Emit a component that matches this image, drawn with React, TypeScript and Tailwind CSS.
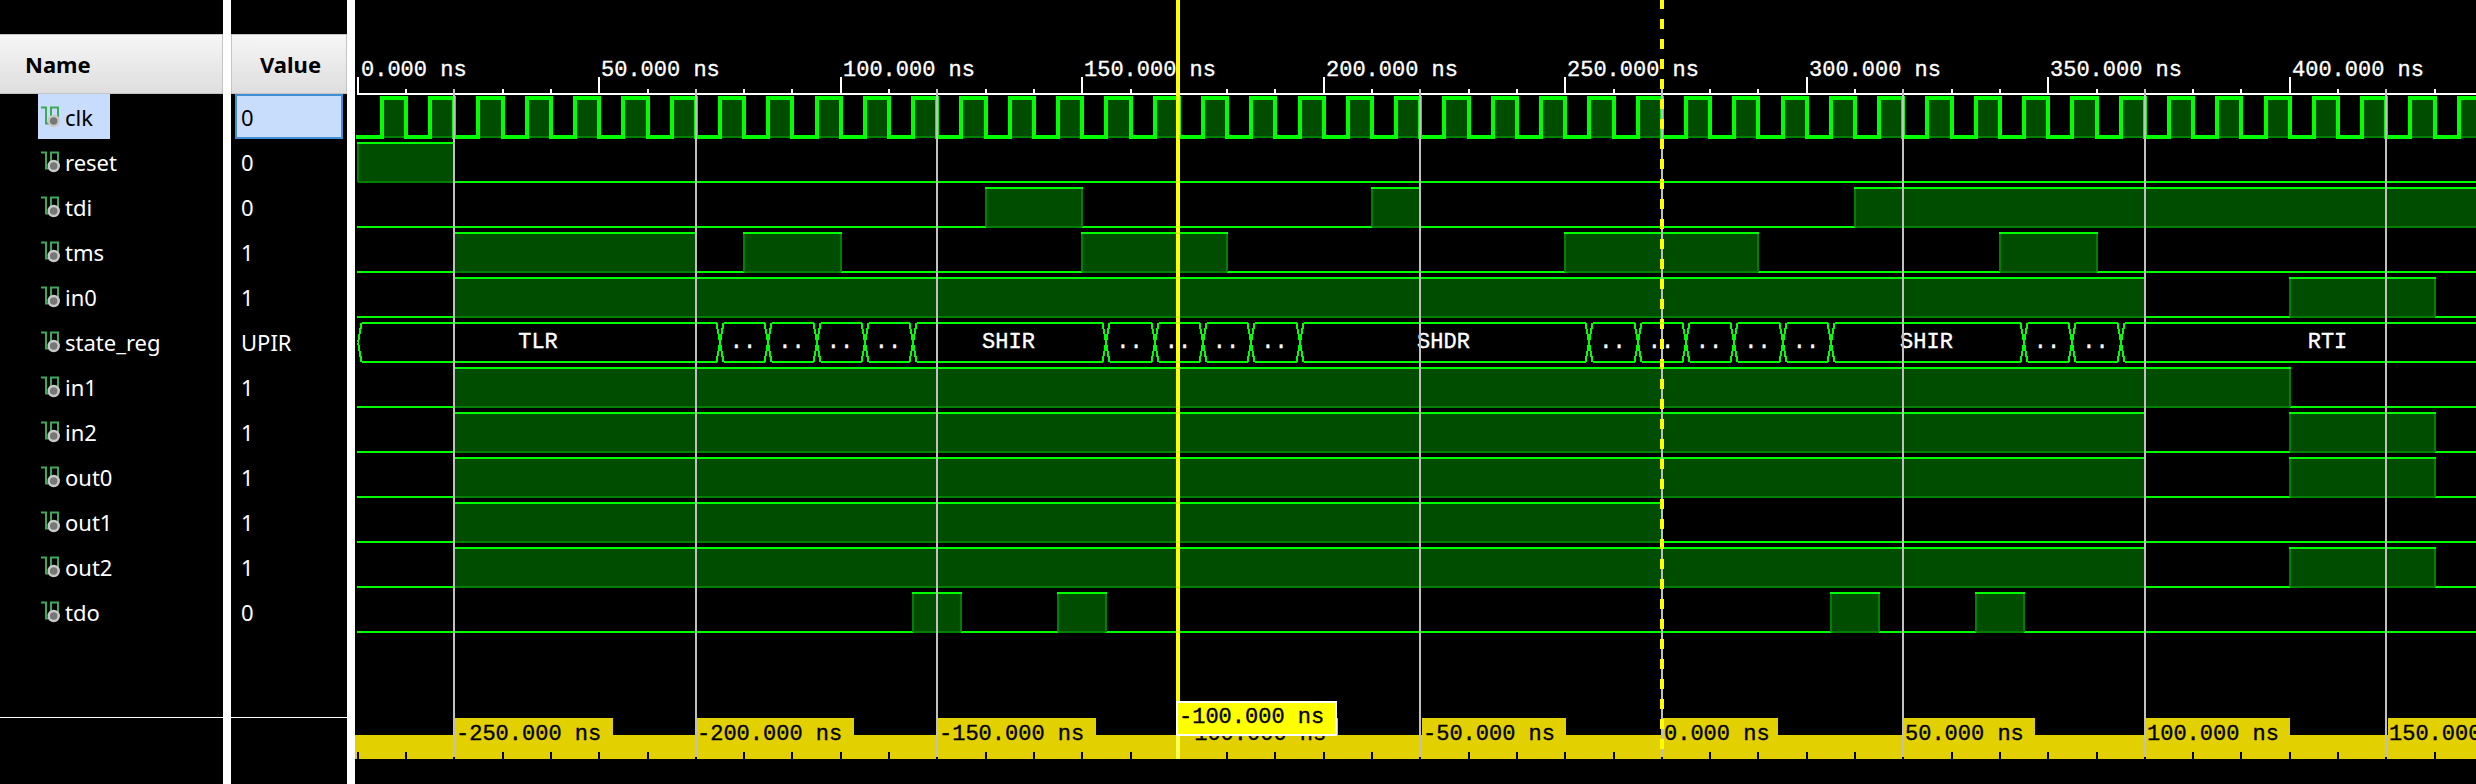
const signals = [
  { name: 'clk', value: '0' },
  { name: 'reset', value: '0' },
  { name: 'tdi', value: '0' },
  { name: 'tms', value: '1' },
  { name: 'in0', value: '1' },
  { name: 'state_reg', value: 'UPIR' },
  { name: 'in1', value: '1' },
  { name: 'in2', value: '1' },
  { name: 'out0', value: '1' },
  { name: 'out1', value: '1' },
  { name: 'out2', value: '1' },
  { name: 'tdo', value: '0' },
];

const END = 440;
const px = (t: number) => Math.round(357.7 + 4.83 * t);
const lowY = (row: number) => 137 + 45 * row;
const highY = (row: number) => 98 + 45 * row;

// high intervals in ns, index is the row number
const levels: Record<number, number[][]> = {
  1: [[0, 20]],
  2: [[130, 150], [210, 220], [310, END]],
  3: [[20, 70], [80, 100], [150, 180], [250, 290], [340, 360]],
  4: [[20, 370], [400, 430]],
  6: [[20, 400]],
  7: [[20, 370], [400, 430]],
  8: [[20, 370], [400, 430]],
  9: [[20, 270]],
  10: [[20, 370], [400, 430]],
  11: [[115, 125], [145, 155], [305, 315], [335, 345]],
};

const busSegments: [number, number, string][] = [
  [0, 75, 'TLR'], [75, 85, '..'], [85, 95, '..'], [95, 105, '..'], [105, 115, '..'],
  [115, 155, 'SHIR'], [155, 165, '..'], [165, 175, '..'], [175, 185, '..'], [185, 195, '..'],
  [195, 255, 'SHDR'], [255, 265, '..'], [265, 275, '..'], [275, 285, '..'], [285, 295, '..'], [295, 305, '..'],
  [305, 345, 'SHIR'], [345, 355, '..'], [355, 365, '..'], [365, 451, 'RTI'],
];

const bandTabs: [number, number, string][] = [
  [455, 158, '-250.000 ns'], [696, 158, '-200.000 ns'], [938, 158, '-150.000 ns'], [1180, 158, '-100.000 ns'],
  [1422, 144, '-50.000 ns'], [1663, 115, '0.000 ns'], [1904, 131, '50.000 ns'], [2146, 144, '100.000 ns'],
  [2388, 130, '150.000 ns'],
];

const range = (n: number) => Array.from({ length: n }, (_, i) => i);

function SignalIcon() {
  return (
    <svg width="24" height="27" viewBox="41 103 24 27" className="shrink-0 ml-[3px]">
      <path d="M41 107.5H46V123.5H51V107.5H58V118" fill="none" stroke="#3fa85a" strokeWidth="2" />
      <circle cx="53.7" cy="121" r="5" fill="#777" stroke="#c8c8c8" strokeWidth="2.5" />
    </svg>
  );
}

function Level({ row }: { row: number }) {
  const low = lowY(row);
  const high = highY(row);
  const spans = levels[row];
  let cursor = 0;
  const lows: number[][] = [];
  spans.forEach(([a, b]) => {
    if (a > cursor) lows.push([cursor, a]);
    cursor = b;
  });
  if (cursor < END) lows.push([cursor, END]);
  return (
    <g>
      {lows.map(([a, b]) => (
        <rect key={a} x={px(a) - 1} y={low - 1} width={px(b) - px(a) + 1} height={2} fill="#00ff00" />
      ))}
      {spans.map(([a, b]) => (
        <g key={a}>
          <rect x={px(a)} y={high} width={px(b) - px(a)} height={low - high + 1} fill="#004d00" />
          <rect x={px(a)} y={low - 1} width={px(b) - px(a)} height={2} fill="#008000" />
          <rect x={px(a) - 1} y={high} width={2} height={low - high} fill="#008000" />
          <rect x={px(b) - 1} y={high} width={2} height={low - high} fill="#008000" />
          <rect x={px(a) - 1} y={high - 1} width={px(b) - px(a) + 2} height={2} fill="#00ff00" />
        </g>
      ))}
    </g>
  );
}

function Clock() {
  let d = 'M356 137';
  for (let t = 5; t < END; t += 10) {
    d += `H${px(t)}V98H${px(t + 5)}V137`;
  }
  return (
    <g>
      {range(44).map((i) => (
        <rect key={i} x={px(5 + i * 10)} y={98} width={24} height={40} fill="#004d00" />
      ))}
      {range(44).map((i) => (
        <rect key={i} x={px(5 + i * 10)} y={136} width={24} height={2} fill="#008000" />
      ))}
      <path d={d} fill="none" stroke="#00ff00" strokeWidth="4" />
    </g>
  );
}

function Bus() {
  const top = 323;
  const bottom = 362;
  const mid = (top + bottom) / 2;
  return (
    <g>
      <path d={`M358 ${mid}L361.5 ${top}M358 ${mid}L361.5 ${bottom}`} stroke="#00ff00" strokeWidth="2" fill="none" />
      {busSegments.map(([a, b, label]) => {
        const x0 = px(a);
        const x1 = px(b);
        return (
          <g key={a}>
            <path
              d={`M${x0 + 3.5} ${top}H${x1 - 3.5}L${x1 + 3.5} ${bottom}M${x0 + 3.5} ${bottom}H${x1 - 3.5}L${x1 + 3.5} ${top}`}
              stroke="#00ff00"
              strokeWidth="2"
              fill="none"
            />
            <text x={(x0 + x1) / 2 - 1} y={348} textAnchor="middle" fill="#fff" stroke="#fff" strokeWidth="0.35">
              {label}
            </text>
          </g>
        );
      })}
    </g>
  );
}

function Waves() {
  return (
    <svg
      width="2121"
      height="784"
      viewBox="355 0 2121 784"
      shapeRendering="crispEdges"
      className="block font-['Liberation_Mono',monospace] text-[22px]"
    >
      {/* time axis */}
      <rect x={357} y={93} width={2119} height={2} fill="#fff" />
      {range(44).map((i) => (
        <rect key={i} x={px(i * 10) - 1} y={i % 5 === 0 ? 77 : 89} width={2} height={i % 5 === 0 ? 17 : 5} fill="#fff" />
      ))}
      {range(9).map((i) => (
        <text key={i} x={px(i * 50) + (i === 0 ? 3 : 2)} y={76} fill="#fff" stroke="#fff" strokeWidth="0.35">
          {i * 50}.000 ns
        </text>
      ))}

      <Clock />
      {[1, 2, 3, 4, 6, 7, 8, 9, 10, 11].map((row) => (
        <Level key={row} row={row} />
      ))}
      <Bus />

      {/* bottom time band */}
      <rect x={355} y={735} width={2121} height={24} fill="#e2d000" />
      {bandTabs.map(([x, w, label]) => (
        <g key={label}>
          <rect x={x} y={718} width={w} height={18} fill="#e2d000" />
          <text x={x + 1} y={740} fill="#000" stroke="#000" strokeWidth="0.35">
            {label}
          </text>
        </g>
      ))}
      {range(44).map((i) => (
        <rect key={i} x={px(i * 10) - 1} y={752} width={2} height={7} fill="#000" />
      ))}

      {/* cursors */}
      {range(9).map((i) => (
        <rect key={i} x={px(20 + i * 50) - 1} y={89} width={2} height={668} fill="#c0c0c0" />
      ))}
      <rect x={1176} y={0} width={4} height={736} fill="#ffff00" />
      <rect x={1176} y={736} width={4} height={23} fill="#ffff55" />
      <line x1={1662} y1={-1} x2={1662} y2={749} stroke="#ffff00" strokeWidth="4" strokeDasharray="10 10" />

      <rect x={1177} y={702} width={159} height={33} fill="#ffff00" stroke="#fff" strokeWidth="2" />
      <text x={1179} y={723} fill="#000" stroke="#000" strokeWidth="0.35">
        -100.000 ns
      </text>
    </svg>
  );
}

function HeaderCell({ label, className }: { label: string; className: string }) {
  return (
    <div
      className={`h-[60px] flex items-center border border-[#c4c4c4] bg-gradient-to-b from-[#f6f6f6] to-[#dedede] text-[22px] font-bold text-black ${className}`}
    >
      {label}
    </div>
  );
}

export default function App() {
  return (
    <div className="flex w-[2476px] h-[784px] overflow-hidden bg-black font-['Noto_Sans',sans-serif]">
      <div className="w-[223px] flex flex-col pt-[34px]">
        <HeaderCell label="Name" className="pl-[25px] border-l-0" />
        {signals.map((s, i) => (
          <div key={s.name} className="h-[45px] pl-[38px] flex text-[22px] leading-none text-white">
            <div className={`flex items-center h-full ${i === 0 ? 'w-[72px] bg-[#c8dcfc] text-black' : ''}`}>
              <SignalIcon />
              <span className="pt-[1px]">{s.name}</span>
            </div>
          </div>
        ))}
        <div className="flex-1" />
        <div className="h-[67px] border-t border-white" />
      </div>
      <div className="w-[8px] bg-white" />
      <div className="w-[116px] flex flex-col pt-[34px]">
        <HeaderCell label="Value" className="pl-[28px]" />
        {signals.map((s, i) => (
          <div key={s.name} className="h-[45px] px-[4px] text-[22px] leading-none text-white">
            <div
              className={`h-full flex items-center pt-[1px] ${i === 0 ? 'bg-[#c8dcfc] border-2 border-[#3f8fd2] pl-[4px] text-black' : 'pl-[6px]'}`}
            >
              {s.value}
            </div>
          </div>
        ))}
        <div className="flex-1" />
        <div className="h-[67px] border-t border-white" />
      </div>
      <div className="w-[8px] bg-white" />
      <Waves />
    </div>
  );
}
